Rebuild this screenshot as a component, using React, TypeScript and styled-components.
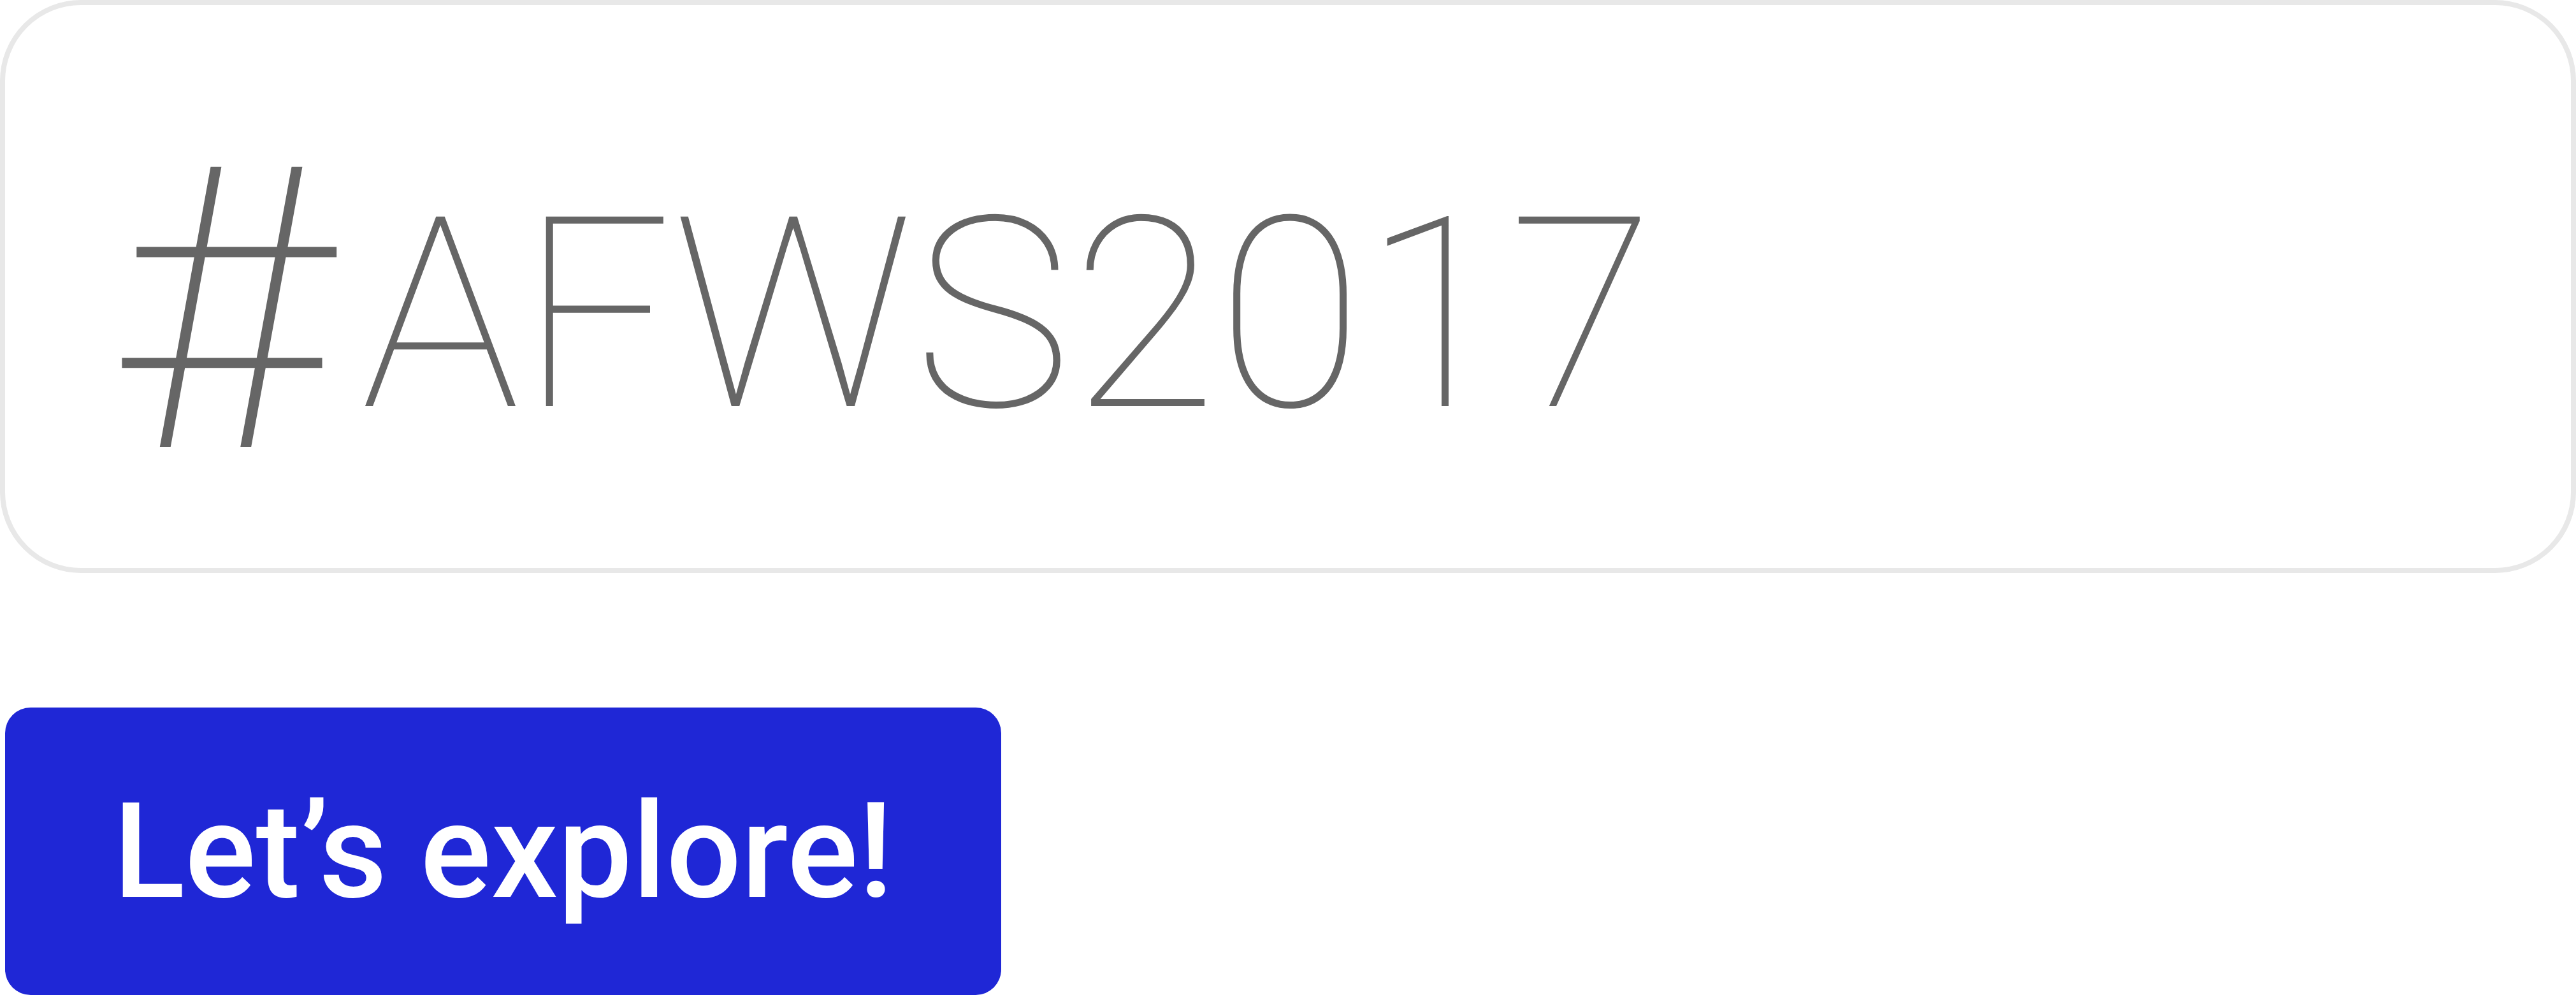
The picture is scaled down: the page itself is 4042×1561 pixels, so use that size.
import React from "react";
import styled, { createGlobalStyle } from "styled-components";

const GlobalStyle = createGlobalStyle`
  html, body {
    margin: 0;
    padding: 0;
    background: #ffffff;
  }
  body {
    font-family: Roboto, "Liberation Sans", sans-serif;
  }
`;

const Page = styled.div`
  display: flex;
  flex-direction: column;
  align-items: flex-start;
  gap: 211px;
  width: 4042px;
`;

const HashCard = styled.div`
  box-sizing: border-box;
  width: 4042px;
  height: 899px;
  border: 8px solid #e8e8e8;
  border-radius: 127px;
  display: flex;
  align-items: flex-start;
  padding: 173px 0 0 168px;
`;

const TagRow = styled.h1`
  margin: 0;
  display: flex;
  align-items: center;
  gap: 52px;
  font-family: Roboto, "Liberation Sans", sans-serif;
  font-weight: 100;
  color: #666666;
  white-space: nowrap;
`;

const HashMark = styled.span`
  font-size: 618px;
  line-height: 1;
`;

const TagWord = styled.span`
  font-size: 418px;
  line-height: 1;
  padding-top: 8px;
`;

const ExploreButton = styled.button`
  box-sizing: border-box;
  margin-left: 8px;
  width: 1563px;
  height: 451px;
  border: none;
  border-radius: 40px;
  background: #1f27d6;
  color: #ffffff;
  font-family: Roboto, "Liberation Sans", sans-serif;
  font-weight: 500;
  font-size: 208px;
  line-height: 1;
  display: flex;
  align-items: center;
  justify-content: center;
  padding: 0;
  cursor: pointer;
`;

export default function App() {
  return (
    <>
      <GlobalStyle />
      <Page>
        <HashCard>
          <TagRow>
            <HashMark>#</HashMark>
            <TagWord>AFWS2017</TagWord>
          </TagRow>
        </HashCard>
        <ExploreButton>Let’s explore!</ExploreButton>
      </Page>
    </>
  );
}
